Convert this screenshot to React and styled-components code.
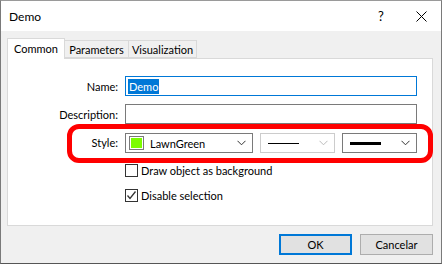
import React from "react";
import styled, { createGlobalStyle } from "styled-components";

const Global = createGlobalStyle`
  html, body { margin: 0; padding: 0; background: #ffffff; }
  body { font-family: "Segoe UI", Lato, "Liberation Sans", sans-serif; font-size: 11px; color: #000; }
  * { box-sizing: border-box; }
`;

const Window = styled.div`
  width: 442px;
  height: 264px;
  border: 1px solid #7a7a7a;
  border-top-color: #9a9a9a;
  border-bottom-color: #555;
  display: flex;
  flex-direction: column;
  background: #f0f0f0;
  overflow: hidden;
`;

const TitleBar = styled.div`
  height: 30px;
  background: #fff;
  display: flex;
  align-items: center;
  padding-left: 8px;
  font-size: 12px;
`;

const Title = styled.span`
  flex: 1;
`;

const CaptionButton = styled.div`
  width: 40px;
  height: 30px;
  display: flex;
  align-items: center;
  justify-content: center;
  font-size: 13px;
`;

const Body = styled.div`
  flex: 1;
  display: flex;
  flex-direction: column;
  padding: 7px 8px 0 6px;
`;

const TabRow = styled.div`
  display: flex;
  align-items: flex-end;
  height: 20px;
  position: relative;
  z-index: 1;
`;

const Tab = styled.div`
  width: ${(p) => p.$w}px;
  height: ${(p) => (p.$active ? "21px" : "18px")};
  margin-bottom: ${(p) => (p.$active ? "-1px" : "0")};
  padding-bottom: ${(p) => (p.$active ? "2px" : "0")};
  border: 1px solid #d9d9d9;
  border-bottom: ${(p) => (p.$active ? "none" : "1px solid #d9d9d9")};
  border-left: ${(p) => (p.$first || p.$active ? "1px solid #d9d9d9" : "none")};
  background: ${(p) => (p.$active ? "#fff" : "#f0f0f0")};
  display: flex;
  align-items: center;
  justify-content: center;
  line-height: 1;
`;

const Panel = styled.div`
  position: relative;
  height: 168px;
  background: #fff;
  border: 1px solid #d9d9d9;
  display: grid;
  grid-template-columns: 102px 292px;
  column-gap: 7px;
  row-gap: 8px;
  grid-auto-rows: 20px;
  align-content: start;
  padding: 17px 0 0 8px;
`;

const Label = styled.div`
  text-align: right;
  align-self: center;
`;

const TextBox = styled.div`
  height: 20px;
  border: 1px solid ${(p) => (p.$focus ? "#0078d7" : "#7a7a7a")};
  display: flex;
  align-items: center;
  padding-left: 2px;
`;

const Selected = styled.span`
  background: #0078d7;
  color: #fff;
  padding: 0 1px;
  line-height: 15px;
`;

const StyleRow = styled.div`
  display: flex;
  gap: 7px;
  margin-top: 1px;
`;

const Combo = styled.div`
  width: ${(p) => p.$w}px;
  height: 20px;
  border: 1px solid ${(p) => (p.$disabled ? "#cccccc" : "#7a7a7a")};
  display: flex;
  align-items: center;
  padding: 0 6px 0 3px;
  gap: 6px;
`;

const Swatch = styled.div`
  width: 15px;
  height: 14px;
  border: 1px solid #7a7a7a;
  padding: 1px;
  &::after {
    content: "";
    display: block;
    width: 100%;
    height: 100%;
    background: #7cfc00;
  }
`;

const ComboText = styled.span`
  flex: 1;
`;

const LineSample = styled.div`
  flex: 1;
  display: flex;
  align-items: center;
  padding: 0 14px 0 4px;
  &::before {
    content: "";
    display: block;
    width: 100%;
    height: ${(p) => p.$thick}px;
    background: #000;
  }
`;

const Chevron = ({ color }) => (
  <svg width="9" height="6" viewBox="0 0 9 6">
    <path d="M0.5 0.8 L4.5 4.8 L8.5 0.8" fill="none" stroke={color} strokeWidth="1" />
  </svg>
);

const CheckRow = styled.div`
  grid-column: 2;
  display: flex;
  align-items: center;
  gap: 3px;
  height: 14px;
  margin-top: ${(p) => p.$mt}px;
`;

const CheckBox = styled.div`
  width: 13px;
  height: 13px;
  border: 1px solid #333;
  display: flex;
  align-items: center;
  justify-content: center;
`;

const Highlight = styled.div`
  position: absolute;
  left: 59px;
  top: 65px;
  width: 366px;
  height: 39px;
  border: 5px solid #ff0000;
  border-radius: 12px;
  pointer-events: none;
`;

const Footer = styled.div`
  display: flex;
  justify-content: flex-end;
  gap: 8px;
  padding-top: 8px;
`;

const Button = styled.div`
  width: 73px;
  height: 21px;
  background: #e1e1e1;
  border: ${(p) => (p.$default ? "2px solid #0078d7" : "1px solid #adadad")};
  display: flex;
  align-items: center;
  justify-content: center;
`;

export default function App() {
  return (
    <>
      <Global />
      <Window>
        <TitleBar>
          <Title>Demo</Title>
          <CaptionButton>?</CaptionButton>
          <CaptionButton>
            <svg width="11" height="11" viewBox="0 0 11 11">
              <path d="M0.5 0.5 L10.5 10.5 M10.5 0.5 L0.5 10.5" stroke="#000" strokeWidth="1" />
            </svg>
          </CaptionButton>
        </TitleBar>
        <Body>
          <TabRow>
            <Tab $active $first $w={58}>Common</Tab>
            <Tab $w={64}>Parameters</Tab>
            <Tab $w={68}>Visualization</Tab>
          </TabRow>
          <Panel>
            <Label>Name:</Label>
            <TextBox $focus>
              <Selected>Demo</Selected>
            </TextBox>
            <Label>Description:</Label>
            <TextBox />
            <Label>Style:</Label>
            <StyleRow>
              <Combo $w={129}>
                <Swatch />
                <ComboText>LawnGreen</ComboText>
                <Chevron color="#333" />
              </Combo>
              <Combo $w={76} $disabled>
                <LineSample $thick={1} />
                <Chevron color="#bbb" />
              </Combo>
              <Combo $w={76}>
                <LineSample $thick={3} />
                <Chevron color="#333" />
              </Combo>
            </StyleRow>
            <CheckRow $mt={3}>
              <CheckBox />
              <span>Draw object as background</span>
            </CheckRow>
            <CheckRow $mt={0}>
              <CheckBox>
                <svg width="11" height="11" viewBox="0 0 11 11">
                  <path d="M1.5 5.5 L4 8.5 L9.5 1.5" fill="none" stroke="#333" strokeWidth="1.3" />
                </svg>
              </CheckBox>
              <span>Disable selection</span>
            </CheckRow>
            <Highlight />
          </Panel>
          <Footer>
            <Button $default>OK</Button>
            <Button>Cancelar</Button>
          </Footer>
        </Body>
      </Window>
    </>
  );
}
